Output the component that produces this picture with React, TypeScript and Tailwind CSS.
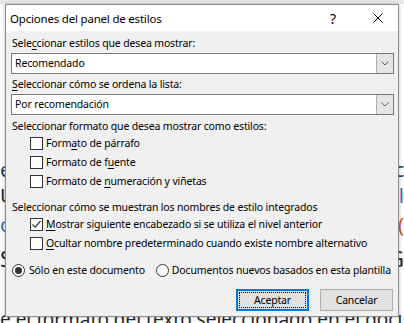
import React from "react";

function CheckBox({ checked = false }: { checked?: boolean }) {
  return (
    <span className="flex h-[13px] w-[13px] shrink-0 items-center justify-center border border-[#333333] bg-white">
      {checked && (
        <svg width="11" height="11" viewBox="0 0 11 11">
          <path d="M1.5 5.5 L4.2 8.2 L9.5 2" fill="none" stroke="#333333" strokeWidth="1.2" />
        </svg>
      )}
    </span>
  );
}

function Radio({ checked = false }: { checked?: boolean }) {
  return (
    <span className="flex h-[13px] w-[13px] shrink-0 items-center justify-center rounded-full border border-[#333333] bg-white">
      {checked && <span className="h-[7px] w-[7px] rounded-full bg-[#333333]" />}
    </span>
  );
}

function Combo({ value }: { value: string }) {
  return (
    <div className="flex h-[21px] items-stretch border border-[#7a7a7a] bg-white">
      <span className="flex flex-1 items-center pl-[3px]">{value}</span>
      <span className="flex w-[17px] items-center justify-center border-l border-[#adadad] bg-[#e5e5e5]">
        <svg width="8" height="5" viewBox="0 0 8 5">
          <path d="M0.5 0.5 L4 4 L7.5 0.5" fill="none" stroke="#606060" strokeWidth="1" />
        </svg>
      </span>
    </div>
  );
}

function U({ children }: { children: React.ReactNode }) {
  return <span className="underline underline-offset-[2px]">{children}</span>;
}

export default function App() {
  return (
    <div className="relative h-[323px] w-[404px] overflow-hidden bg-white font-['Noto_Sans',sans-serif] text-black">
      {/* document behind the dialog */}
      <div className="flex flex-col">
        <div className="h-[4px] bg-[#e9e9e9]" />
        <div className="mt-[154px] flex h-[24px] items-center justify-between text-[20px] leading-none">
          <span className="text-[#1f3864]">e</span>
          <span className="text-[#1f3864]">c</span>
        </div>
        <div className="flex h-[28px] items-center justify-between text-[20px] leading-none">
          <span className="text-[#262626]">U</span>
          <span className="text-[#2e74b5]">l</span>
        </div>
        <div className="flex h-[30px] items-center justify-between text-[20px] leading-none">
          <span className="text-[#2e74b5]">o</span>
          <span className="text-[#c55a11]">(</span>
        </div>
        <div className="flex h-[36px] items-center justify-between text-[22px] leading-none">
          <span className="text-[#262626]">S</span>
          <span className="text-[#262626]">G</span>
        </div>
        <div className="mt-[34px] whitespace-nowrap text-[19px] leading-none text-[#262626]">
          e el formato del texto seleccionado en el documento
        </div>
      </div>

      {/* dialog */}
      <div className="absolute left-[5px] top-[4px] flex h-[313px] w-[394px] flex-col border border-[#8c8c8c] bg-[#f0f0f0] text-[10.5px] leading-[15px] tracking-[-0.15px] shadow-[0_0_4px_rgba(0,0,0,0.25)]">
        <div className="flex h-[26px] items-center bg-white pl-[4px] pr-[15px]">
          <span className="flex-1 text-[11.5px] tracking-[-0.2px]">Opciones del panel de estilos</span>
          <span className="mr-[37px] text-[14px]">?</span>
          <svg width="10" height="10" viewBox="0 0 10 10">
            <path d="M0.5 0.5 L9.5 9.5 M9.5 0.5 L0.5 9.5" stroke="#000" strokeWidth="1" />
          </svg>
        </div>
        <div className="flex flex-col pl-[5px] pr-[4px] pt-[5px]">
          <div className="h-[16px] pl-[1px]">
            Sele<U>c</U>cionar estilos que desea mostrar:
          </div>
          <div className="mt-[1px]">
            <Combo value="Recomendado" />
          </div>
          <div className="mt-[3px] h-[16px] pl-[1px]">
            <U>S</U>eleccionar cómo se ordena la lista:
          </div>
          <div className="mt-[1px]">
            <Combo value="Por recomendación" />
          </div>
          <div className="mt-[4px] h-[15px] pl-[1px]">
            Seleccionar formato que desea mostrar como estilos:
          </div>
          <div className="flex h-[19px] items-center gap-[3px] pl-[19px]">
            <CheckBox />
            <span>
              Form<U>a</U>to de párrafo
            </span>
          </div>
          <div className="flex h-[19px] items-center gap-[3px] pl-[19px]">
            <CheckBox />
            <span>
              Formato de f<U>u</U>ente
            </span>
          </div>
          <div className="flex h-[19px] items-center gap-[3px] pl-[19px]">
            <CheckBox />
            <span>
              Formato de <U>n</U>umeración y viñetas
            </span>
          </div>
          <div className="mt-[9px] h-[15px] pl-[1px]">
            Seleccionar cómo se muestran los nombres de estilo integrados
          </div>
          <div className="flex h-[19px] items-center gap-[3px] pl-[19px]">
            <CheckBox checked />
            <span>
              <U>M</U>ostrar siguiente encabezado si se utiliza el nivel anterior
            </span>
          </div>
          <div className="flex h-[19px] items-center gap-[3px] pl-[19px]">
            <CheckBox />
            <span>
              <U>O</U>cultar nombre predeterminado cuando existe nombre alternativo
            </span>
          </div>
          <div className="mt-[8px] flex h-[18px] items-center whitespace-nowrap pl-[1px]">
            <Radio checked />
            <span className="ml-[4px]">Sólo en este documento</span>
            <span className="ml-[11px] flex items-center">
              <Radio />
              <span className="ml-[3px]">Documentos nuevos basados en esta plantilla</span>
            </span>
          </div>
          <div className="mt-[10px] flex justify-end gap-[11px] pr-[1px]">
            <button className="flex h-[22px] w-[73px] items-center justify-center border-2 border-[#0078d7] bg-[#e1e1e1] p-[1px]">
              <span className="flex h-full w-full items-center justify-center border border-dotted border-[#000]">
                Aceptar
              </span>
            </button>
            <button className="flex h-[22px] w-[73px] items-center justify-center border border-[#adadad] bg-[#e1e1e1]">
              Cancelar
            </button>
          </div>
        </div>
      </div>
    </div>
  );
}
